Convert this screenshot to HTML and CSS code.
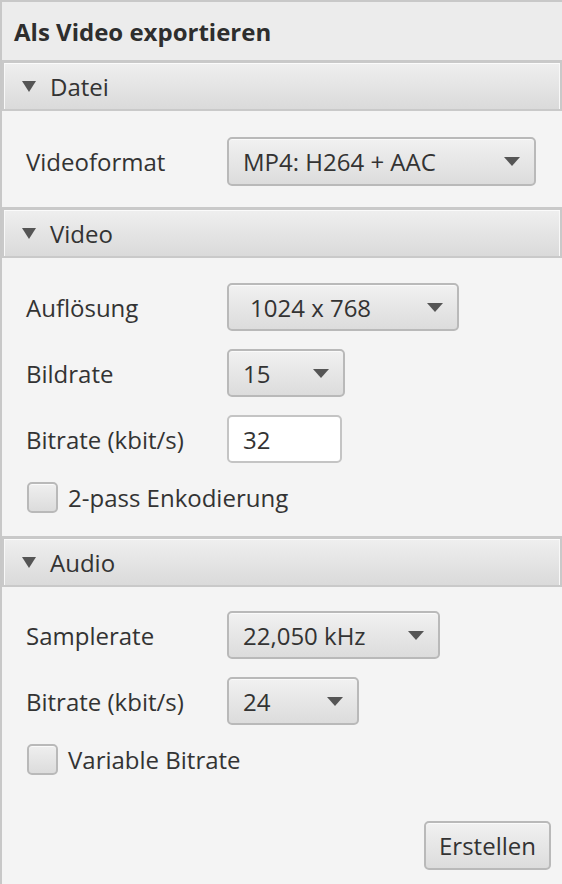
FILE: index.html
```html
<!DOCTYPE html>
<html lang="de">
<head>
<meta charset="utf-8">
<title>Als Video exportieren</title>
<link rel="stylesheet" href="styles.css">
</head>
<body>
<div class="dialog">
  <div class="title">Als Video exportieren</div>

  <section class="pane">
    <div class="pane-head"><span class="tri"></span><span>Datei</span></div>
    <div class="pane-body body-datei">
      <div class="row">
        <span class="lbl">Videoformat</span>
        <div class="combo w-format"><span class="val">MP4: H264 + AAC</span><span class="arrow"></span></div>
      </div>
    </div>
  </section>

  <section class="pane">
    <div class="pane-head"><span class="tri"></span><span>Video</span></div>
    <div class="pane-body">
      <div class="row">
        <span class="lbl">Auflösung</span>
        <div class="combo w-res"><span class="val val-indent">1024 x 768</span><span class="arrow"></span></div>
      </div>
      <div class="row">
        <span class="lbl">Bildrate</span>
        <div class="combo w-fps"><span class="val">15</span><span class="arrow"></span></div>
      </div>
      <div class="row">
        <span class="lbl">Bitrate (kbit/s)</span>
        <div class="field w-vbit">32</div>
      </div>
      <label class="check"><span class="box"></span><span>2-pass Enkodierung</span></label>
    </div>
  </section>

  <section class="pane">
    <div class="pane-head"><span class="tri"></span><span>Audio</span></div>
    <div class="pane-body body-audio">
      <div class="row">
        <span class="lbl">Samplerate</span>
        <div class="combo w-rate"><span class="val">22,050 kHz</span><span class="arrow"></span></div>
      </div>
      <div class="row">
        <span class="lbl">Bitrate (kbit/s)</span>
        <div class="combo w-abit"><span class="val">24</span><span class="arrow"></span></div>
      </div>
      <label class="check"><span class="box"></span><span>Variable Bitrate</span></label>
      <div class="actions"><button class="btn">Erstellen</button></div>
    </div>
  </section>
</div>
</body>
</html>
```

FILE: styles.css
```css
* { box-sizing: border-box; }
html, body { margin: 0; padding: 0; }
body {
  font-family: "Open Sans", "Noto Sans", sans-serif;
  font-size: 24px;
  color: #333333;
  background: #f4f4f4;
}
.dialog {
  width: 562px;
  height: 884px;
  border-left: 2px solid #c8c8c8;
  border-top: 2px solid #c8c8c8;
  background: #f4f4f4;
  display: flex;
  flex-direction: column;
  overflow: hidden;
}
.title {
  height: 58px;
  background: #ececec;
  font-weight: bold;
  font-size: 24px;
  display: flex;
  align-items: center;
  padding-left: 12px;
  padding-top: 1px;
  color: #2e2e2e;
}
.pane-head {
  height: 51px;
  border: 2px solid #c9c9c9;
  border-top-width: 3px;
  box-shadow: inset 0 1px 0 #fbfbfb, inset 1px 0 0 #f8f8f8, inset -1px 0 0 #f8f8f8;
  background: linear-gradient(#efefef, #dadada);
  display: flex;
  align-items: center;
  padding-left: 18px;
  gap: 14px;
  color: #333;
}
.tri {
  width: 0;
  height: 0;
  border-left: 7px solid transparent;
  border-right: 7px solid transparent;
  border-top: 11px solid #555555;
  margin-top: 1px;
}
.pane-body {
  padding: 25px 0 22px 24px;
  display: flex;
  flex-direction: column;
  gap: 18px;
}
.body-datei { padding-top: 26px; padding-bottom: 21px; }
.body-audio { padding-top: 24px; padding-bottom: 0; }
.row {
  display: flex;
  align-items: center;
}
.lbl {
  width: 201px;
  flex: none;
}
.combo {
  height: 48px;
  border: 2px solid #b9b9b9;
  border-radius: 5px;
  background: linear-gradient(#f1f1f1, #dcdcdc);
  box-shadow: inset 0 1px 0 #fafafa;
  display: flex;
  align-items: center;
  justify-content: space-between;
  padding: 0 14px 0 14px;
}
.w-format { width: 309px; height: 49px; }
.w-res { width: 232px; }
.w-fps { width: 118px; }
.w-rate { width: 213px; }
.w-abit { width: 132px; }
.val-indent { padding-left: 7px; }
.arrow {
  width: 0;
  height: 0;
  border-left: 8px solid transparent;
  border-right: 8px solid transparent;
  border-top: 9px solid #555555;
}
.field {
  height: 48px;
  border: 2px solid #c4c4c4;
  border-radius: 5px;
  background: #ffffff;
  display: flex;
  align-items: center;
  padding-left: 14px;
}
.w-vbit { width: 115px; }
.check {
  display: flex;
  align-items: center;
  gap: 10px;
  margin-left: 1px;
}
.box {
  width: 31px;
  height: 31px;
  border: 2px solid #b9b9b9;
  border-radius: 5px;
  background: linear-gradient(#efefef, #dcdcdc);
  box-shadow: inset 0 1px 0 #fafafa;
}
.actions {
  display: flex;
  justify-content: flex-end;
  padding-right: 11px;
  margin-top: 27px;
}
.btn {
  font-family: inherit;
  font-size: 24px;
  color: #333;
  width: 127px;
  height: 49px;
  border: 2px solid #b9b9b9;
  border-radius: 5px;
  background: linear-gradient(#f1f1f1, #dcdcdc);
  box-shadow: inset 0 1px 0 #fafafa;
  padding: 0;
}
```
